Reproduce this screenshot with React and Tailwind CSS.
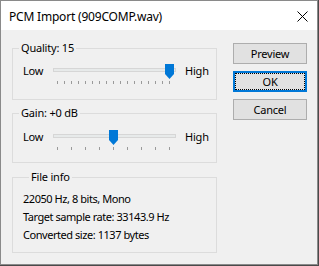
import React from 'react';

const Slider = ({ ticks, pos }) => {
    // pos = index of the tick the thumb sits on
    const step = 112 / (ticks - 1);
    return (
        <div className="flex items-start pl-[10px]">
            <div className="w-[30px] h-[16px] leading-[16px] -mt-[1px]">Low</div>
            <div className="relative w-[123px] h-[21px]">
                <div className="mt-[4px] h-[4px] border border-[#d6d6d6] bg-[#e7eaea]"></div>
                <div className="mt-[9px] ml-[4px] w-[113px] flex justify-between">
                    {Array.from({ length: ticks }).map((_, i) => (
                        <div key={i} className="w-px h-[3px] bg-[#9a9a9a]"></div>
                    ))}
                </div>
                <svg
                    className="absolute top-0"
                    style={{ left: Math.round(pos * step) }}
                    width="9"
                    height="15"
                    viewBox="0 0 9 15"
                >
                    <polygon points="0,0 9,0 9,10 4.5,15 0,10" fill="#0078d7" />
                </svg>
            </div>
            <div className="ml-[9px] h-[16px] leading-[16px] -mt-[1px]">High</div>
        </div>
    );
};

const Group = ({ label, className, children }) => (
    <fieldset className={`border border-[#dcdcdc] ${className}`}>
        <legend className="ml-[6px] px-[2px] leading-[16px]">{label}</legend>
        {children}
    </fieldset>
);

const Button = ({ children }) => (
    <button className="w-[74px] h-[21px] bg-[#e1e1e1] border border-[#adadad] leading-[19px] text-center">
        {children}
    </button>
);

export default function App() {
    return (
        <div className="w-[319px] h-[266px] bg-[#4a4a4a]">
            <div className="w-[318px] h-[265px] border border-[#8a8a8a] bg-[#f0f0f0] flex flex-col text-[11px] tracking-[-0.2px] text-black font-['Noto_Sans',sans-serif]">
                <div className="h-[29px] bg-white flex items-center pl-[8px] pr-[9px] shrink-0">
                    <div className="flex-1 text-[12px] leading-[16px] mt-[2px]">PCM Import (909COMP.wav)</div>
                    <svg width="11" height="11" viewBox="0 0 11 11" className="mt-[1px]">
                        <path d="M0.5 0.5 L10.5 10.5 M10.5 0.5 L0.5 10.5" stroke="#000" strokeWidth="1" />
                    </svg>
                </div>

                <div className="flex pl-[11px]">
                    <div className="w-[205px] pt-[10px] flex flex-col">
                        <Group label="Quality: 15" className="h-[60px] pt-[8px]">
                            <Slider ticks={17} pos={16} />
                        </Group>
                        <Group label="Gain: +0 dB" className="h-[58px] mt-[5px] pt-[9px]">
                            <Slider ticks={9} pos={4} />
                        </Group>
                        <Group label="File info" className="h-[84px] mt-[6px] pt-[5px] pl-[10px]">
                            <div className="leading-[18px] tracking-[-0.45px]">22050 Hz, 8 bits, Mono</div>
                            <div className="leading-[18px] tracking-[-0.45px]">Target sample rate: 33143.9 Hz</div>
                            <div className="leading-[18px] tracking-[-0.45px]">Converted size: 1137 bytes</div>
                        </Group>
                    </div>

                    <div className="ml-[16px] pt-[13px] flex flex-col gap-[7px]">
                        <Button>Preview</Button>
                        <button className="w-[74px] h-[21px] bg-[#e1e1e1] border-2 border-[#0078d7] p-0">
                            <div className="h-full border border-dotted border-black leading-[15px] text-center">OK</div>
                        </button>
                        <Button>Cancel</Button>
                    </div>
                </div>
            </div>
        </div>
    );
}
